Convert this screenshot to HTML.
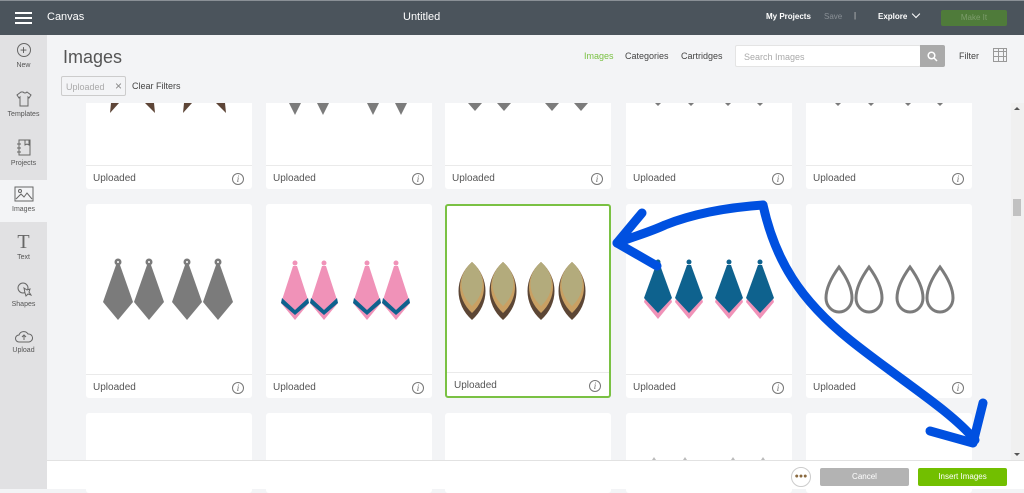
<!DOCTYPE html>
<html><head><meta charset="utf-8"><style>
*{margin:0;padding:0;box-sizing:border-box}
body{width:1024px;height:489px;overflow:hidden;background:#f3f4f6;font-family:"Liberation Sans",sans-serif;position:relative}
.abs{position:absolute}
.top{left:0;top:0;width:1024px;height:35px;background:#4b545c;border-top:1px solid #8a9096;z-index:5;color:#fff}
.side{left:0;top:35px;width:47px;height:454px;background:#e1e1e3;z-index:5}
.si{position:absolute;left:0;width:47px;text-align:center;font-size:7px;color:#555}
.hdr{left:47px;top:35px;width:977px;height:68px;background:#f3f4f6;z-index:4}
.card{position:absolute;background:#fff;border-radius:3px;width:166px}
.card .lab{position:absolute;left:0;right:0;bottom:0;height:24px;border-top:1px solid #eaeaea;font-size:10px;color:#555;padding:7px 0 0 7px}
.card .i{position:absolute;right:8px;bottom:4px;width:12px;height:12px;border:1px solid #777;border-radius:50%;font:italic 9px "Liberation Serif",serif;color:#666;text-align:center;line-height:10px}
.bot{left:47px;top:460px;width:977px;height:29px;background:#fff;border-top:1px solid #e2e2e2;z-index:4}
</style></head><body>
<div class="abs top">
 <div class="abs" style="left:15px;top:11px;width:17px;height:2px;background:#fff;box-shadow:0 5px 0 #fff,0 10px 0 #fff"></div>
 <div class="abs" style="left:47px;top:10px;font-size:11px">Canvas</div>
 <div class="abs" style="left:403px;top:10px;font-size:11px">Untitled</div>
 <div class="abs" style="left:766px;top:11px;font-size:8px;font-weight:bold">My Projects</div>
 <div class="abs" style="left:824px;top:11px;font-size:8px;color:#8a9096">Save</div>
 <div class="abs" style="left:854px;top:10px;font-size:8px;color:#ccc">|</div>
 <div class="abs" style="left:878px;top:11px;font-size:8px;font-weight:bold">Explore</div>
 <div class="abs" style="left:913px;top:10px;width:6px;height:6px;border-right:1px solid #fff;border-bottom:1px solid #fff;transform:rotate(45deg)"></div>
 <div class="abs" style="left:941px;top:9px;width:66px;height:16px;background:#4f7b3a;border-radius:2px;font-size:8px;color:#7d9d6c;text-align:center;line-height:16px">Make It</div>
</div>
<div class="abs side">
 <div class="abs" style="left:0;top:145px;width:47px;height:42px;background:#f3f4f6"></div>
 <div class="si" style="top:8px"><div style="width:14px;height:14px;border:1px solid #666;border-radius:50%;margin:0 auto 5px;font-size:12px;line-height:12px;color:#555">+</div>New</div>
 <div class="si" style="top:56px"><svg width="16" height="16" viewBox="0 0 16 16" style="display:block;margin:0 auto 4px"><path d="M5 1L1 4l2 3 1-1v9h8V6l1 1 2-3-4-3q-2 2-4 0z" fill="none" stroke="#666"/></svg>Templates</div>
 <div class="si" style="top:104px"><svg width="16" height="18" viewBox="0 0 16 18" style="display:block;margin:0 auto 3px"><rect x="3" y="1" width="11" height="15" fill="none" stroke="#666"/><path d="M1 5h4M1 9h4M1 13h4M9 1v5l2-1 2 1V1" fill="none" stroke="#666"/></svg>Projects</div>
 <div class="si" style="top:151px"><svg width="20" height="16" viewBox="0 0 20 16" style="display:block;margin:0 auto 4px"><rect x="1" y="1" width="18" height="14" fill="none" stroke="#666"/><circle cx="6" cy="5" r="1.5" fill="none" stroke="#666"/><path d="M2 13l5-5 3 3 3-4 5 6" fill="none" stroke="#666"/></svg>Images</div>
 <div class="si" style="top:198px"><div style="font:20px 'Liberation Serif',serif;color:#666;line-height:18px;margin-bottom:3px">T</div>Text</div>
 <div class="si" style="top:246px"><svg width="16" height="16" viewBox="0 0 16 16" style="display:block;margin:0 auto 4px"><circle cx="7" cy="7" r="5" fill="none" stroke="#666"/><path d="M8 7l3 2 3-1-1 3 2 3-3-1-2 2-1-3z" fill="#e1e1e3" stroke="#666"/></svg>Shapes</div>
 <div class="si" style="top:294px"><svg width="18" height="14" viewBox="0 0 18 14" style="display:block;margin:0 auto 4px"><path d="M4 13a3 3 0 010-7 5 5 0 019-1 4 4 0 011 8z" fill="none" stroke="#666"/><path d="M9 11V6M7 8l2-2 2 2" fill="none" stroke="#666"/></svg>Upload</div>
</div>
<div class="abs hdr">
 <div class="abs" style="left:16px;top:12px;font-size:18px;color:#555;font-weight:300">Images</div>
 <div class="abs" style="left:14px;top:41px;width:65px;height:20px;border:1px solid #ccc;border-radius:2px;font-size:9px;color:#aaa;padding:5px 0 0 4px">Uploaded <span style="color:#888;font-size:12px;position:absolute;right:3px;top:2px">×</span></div>
 <div class="abs" style="left:85px;top:46px;font-size:9px;color:#444">Clear Filters</div>
 <div class="abs" style="left:537px;top:16px;font-size:9px;color:#7ac143">Images</div>
 <div class="abs" style="left:578px;top:16px;font-size:9px;color:#444">Categories</div>
 <div class="abs" style="left:634px;top:16px;font-size:9px;color:#444">Cartridges</div>
 <div class="abs" style="left:688px;top:10px;width:186px;height:22px;background:#fff;border:1px solid #e4e4e4;border-radius:2px;font-size:9px;color:#aaa;padding:6px 0 0 8px">Search Images</div>
 <div class="abs" style="left:873px;top:10px;width:25px;height:22px;background:#aaa;border-radius:0 2px 2px 0"><svg class="abs" style="left:7px;top:6px" width="11" height="11" viewBox="0 0 11 11"><circle cx="4.5" cy="4.5" r="3.3" fill="none" stroke="#fff" stroke-width="1.5"/><path d="M7 7l3 3" stroke="#fff" stroke-width="1.5"/></svg></div>
 <div class="abs" style="left:912px;top:16px;font-size:9px;color:#444">Filter</div>
 <div class="abs" style="left:946px;top:13px;width:14px;height:14px;background:repeating-linear-gradient(90deg,transparent 0 4px,#999 4px 5px),repeating-linear-gradient(0deg,transparent 0 4px,#999 4px 5px);border:1px solid #999"></div>
</div>

<div class="card" style="left:86px;top:60px;height:129px"><div class="lab">Uploaded<span class="i">i</span></div></div>
<div class="card" style="left:266px;top:60px;height:129px"><div class="lab">Uploaded<span class="i">i</span></div></div>
<div class="card" style="left:445px;top:60px;height:129px"><div class="lab">Uploaded<span class="i">i</span></div></div>
<div class="card" style="left:626px;top:60px;height:129px"><div class="lab">Uploaded<span class="i">i</span></div></div>
<div class="card" style="left:806px;top:60px;height:129px"><div class="lab">Uploaded<span class="i">i</span></div></div>

<div class="card" style="left:86px;top:204px;height:194px"><div class="lab">Uploaded<span class="i">i</span></div></div>
<div class="card" style="left:266px;top:204px;height:194px"><div class="lab">Uploaded<span class="i">i</span></div></div>
<div class="card" style="left:445px;top:204px;height:194px;border:2px solid #7ac143"><div class="lab">Uploaded<span class="i">i</span></div></div>
<div class="card" style="left:626px;top:204px;height:194px"><div class="lab">Uploaded<span class="i">i</span></div></div>
<div class="card" style="left:806px;top:204px;height:194px"><div class="lab">Uploaded<span class="i">i</span></div></div>

<div class="card" style="left:86px;top:413px;height:80px"></div>
<div class="card" style="left:266px;top:413px;height:80px"></div>
<div class="card" style="left:445px;top:413px;height:80px"></div>
<div class="card" style="left:626px;top:413px;height:80px"></div>
<div class="card" style="left:806px;top:413px;height:80px"></div>

<svg class="abs" style="left:0;top:0;z-index:3" width="1024" height="489" viewBox="0 0 1024 489">
<g fill="#5d4537"><path d="M111 103h8l-9 10z"/><path d="M145 103h9l1 10z"/><path d="M184 103h8l-9 10z"/><path d="M216 103h9l1 10z"/></g>
<g fill="#7b7b7b"><path d="M289 103h12l-6 12z"/><path d="M317 103h12l-6 12z"/><path d="M367 103h12l-6 12z"/><path d="M395 103h12l-6 12z"/><path d="M468 103h14l-7 8z"/><path d="M497 103h14l-7 8z"/><path d="M545 103h14l-7 8z"/><path d="M574 103h14l-7 8z"/></g>
<g fill="#7b7b7b"><path d="M655 103h6l-3 3z"/><path d="M688 103h6l-3 3z"/><path d="M725 103h6l-3 3z"/><path d="M757 103h6l-3 3z"/><path d="M835 103h6l-3 3z"/><path d="M868 103h6l-3 3z"/><path d="M905 103h6l-3 3z"/><path d="M937 103h6l-3 3z"/></g>
<!-- gray kites -->
<g fill="#7b7b7b">
 <g transform="translate(118 262)"><path d="M-2 3 L-15 40 L0 58 L15 40 L2 3Z"/><circle r="3.5"/></g>
 <g transform="translate(149 262)"><path d="M-2 3 L-15 40 L0 58 L15 40 L2 3Z"/><circle r="3.5"/></g>
 <g transform="translate(187 262)"><path d="M-2 3 L-15 40 L0 58 L15 40 L2 3Z"/><circle r="3.5"/></g>
 <g transform="translate(218 262)"><path d="M-2 3 L-15 40 L0 58 L15 40 L2 3Z"/><circle r="3.5"/></g>
 <g fill="#fff"><circle cx="118" cy="262" r="1"/><circle cx="149" cy="262" r="1"/><circle cx="187" cy="262" r="1"/><circle cx="218" cy="262" r="1"/></g>
</g>
<!-- pink kites -->
<g transform="translate(295 263)"><path d="M-2 3 L-14 40 L0 57 L14 40 L2 3Z" fill="#f092b8"/><path d="M-13 35 L0 47 L13 35 L14 40 L0 52 L-14 40Z" fill="#0e628e"/><circle r="2.5" fill="#f092b8"/></g>
<g transform="translate(324 263)"><path d="M-2 3 L-14 40 L0 57 L14 40 L2 3Z" fill="#f092b8"/><path d="M-13 35 L0 47 L13 35 L14 40 L0 52 L-14 40Z" fill="#0e628e"/><circle r="2.5" fill="#f092b8"/></g>
<g transform="translate(367 263)"><path d="M-2 3 L-14 40 L0 57 L14 40 L2 3Z" fill="#f092b8"/><path d="M-13 35 L0 47 L13 35 L14 40 L0 52 L-14 40Z" fill="#0e628e"/><circle r="2.5" fill="#f092b8"/></g>
<g transform="translate(396 263)"><path d="M-2 3 L-14 40 L0 57 L14 40 L2 3Z" fill="#f092b8"/><path d="M-13 35 L0 47 L13 35 L14 40 L0 52 L-14 40Z" fill="#0e628e"/><circle r="2.5" fill="#f092b8"/></g>
<!-- leaves -->
<g transform="translate(472 262)"><path d="M0 0 C-18 16 -18 42 0 58 C18 42 18 16 0 0Z" fill="#5c4635"/><path d="M0 0 C-16 14 -16 36 0 51 C16 36 16 14 0 0Z" fill="#c9a063"/><path d="M0 0 C-14 12 -14 31 0 44 C14 31 14 12 0 0Z" fill="#b3ab7c"/></g>
<g transform="translate(503 262)"><path d="M0 0 C-18 16 -18 42 0 58 C18 42 18 16 0 0Z" fill="#5c4635"/><path d="M0 0 C-16 14 -16 36 0 51 C16 36 16 14 0 0Z" fill="#c9a063"/><path d="M0 0 C-14 12 -14 31 0 44 C14 31 14 12 0 0Z" fill="#b3ab7c"/></g>
<g transform="translate(541 262)"><path d="M0 0 C-18 16 -18 42 0 58 C18 42 18 16 0 0Z" fill="#5c4635"/><path d="M0 0 C-16 14 -16 36 0 51 C16 36 16 14 0 0Z" fill="#c9a063"/><path d="M0 0 C-14 12 -14 31 0 44 C14 31 14 12 0 0Z" fill="#b3ab7c"/></g>
<g transform="translate(572 262)"><path d="M0 0 C-18 16 -18 42 0 58 C18 42 18 16 0 0Z" fill="#5c4635"/><path d="M0 0 C-16 14 -16 36 0 51 C16 36 16 14 0 0Z" fill="#c9a063"/><path d="M0 0 C-14 12 -14 31 0 44 C14 31 14 12 0 0Z" fill="#b3ab7c"/></g>
<!-- teal kites -->
<g transform="translate(658 262)"><path d="M-2 3 L-14 40 L0 57 L14 40 L2 3Z" fill="#f092b8"/><path d="M-2 3 L-14 36 L0 51 L14 36 L2 3Z" fill="#0e628e"/><circle r="2.5" fill="#0e628e"/></g>
<g transform="translate(689 262)"><path d="M-2 3 L-14 40 L0 57 L14 40 L2 3Z" fill="#f092b8"/><path d="M-2 3 L-14 36 L0 51 L14 36 L2 3Z" fill="#0e628e"/><circle r="2.5" fill="#0e628e"/></g>
<g transform="translate(729 262)"><path d="M-2 3 L-14 40 L0 57 L14 40 L2 3Z" fill="#f092b8"/><path d="M-2 3 L-14 36 L0 51 L14 36 L2 3Z" fill="#0e628e"/><circle r="2.5" fill="#0e628e"/></g>
<g transform="translate(760 262)"><path d="M-2 3 L-14 40 L0 57 L14 40 L2 3Z" fill="#f092b8"/><path d="M-2 3 L-14 36 L0 51 L14 36 L2 3Z" fill="#0e628e"/><circle r="2.5" fill="#0e628e"/></g>
<!-- drops -->
<g fill="none" stroke="#7b7b7b" stroke-width="3">
 <path d="M839 267 C831 278 826 288 826 298 C826 306 832 312 839 312 C846 312 852 306 852 298 C852 288 847 278 839 267Z"/>
 <path d="M869 267 C861 278 856 288 856 298 C856 306 862 312 869 312 C876 312 882 306 882 298 C882 288 877 278 869 267Z"/>
 <path d="M910 267 C902 278 897 288 897 298 C897 306 903 312 910 312 C917 312 923 306 923 298 C923 288 918 278 910 267Z"/>
 <path d="M940 267 C932 278 927 288 927 298 C927 306 933 312 940 312 C947 312 953 306 953 298 C953 288 948 278 940 267Z"/>
</g>
<g fill="#bbb"><path d="M652 460l2-3 2 3z"/><path d="M683 460l2-3 2 3z"/><path d="M731 460l2-3 2 3z"/><path d="M761 460l2-3 2 3z"/></g>
<g fill="none" stroke="#0050e0" stroke-width="9" stroke-linecap="round" stroke-linejoin="round">
 <path d="M763 205 C720 208 690 215 665 225 C650 232 635 236 617 243"/>
 <path d="M642 213 L617 243 L657 266"/>
 <path d="M763 205 C775 260 800 300 850 340 C900 380 950 410 975 440"/>
 <path d="M930 431 L973 443 L983 403"/>
</g>
</svg>

<div class="abs" style="left:1011px;top:103px;width:13px;height:357px;background:#f0f0f0;z-index:4">
 <div class="abs" style="left:2px;top:96px;width:8px;height:17px;background:#c1c1c1"></div>
 <div class="abs" style="left:3px;top:4px;border:3px solid transparent;border-bottom-color:#555;border-top:0"></div>
 <div class="abs" style="left:3px;top:350px;border:3px solid transparent;border-top-color:#555;border-bottom:0"></div>
</div>
<div class="abs bot">
 <div class="abs" style="left:744px;top:6px;width:20px;height:20px;border:1px solid #ccc;border-radius:50%;font-size:7px;color:#8a6a40;text-align:center;line-height:18px">●●●</div>
 <div class="abs" style="left:773px;top:7px;width:89px;height:18px;background:#b3b3b3;border-radius:2px;color:#fff;font-size:8px;text-align:center;line-height:18px">Cancel</div>
 <div class="abs" style="left:871px;top:7px;width:89px;height:18px;background:#72bf00;border-radius:2px;color:#fff;font-size:8px;text-align:center;line-height:18px">Insert Images</div>
</div>
</body></html>
